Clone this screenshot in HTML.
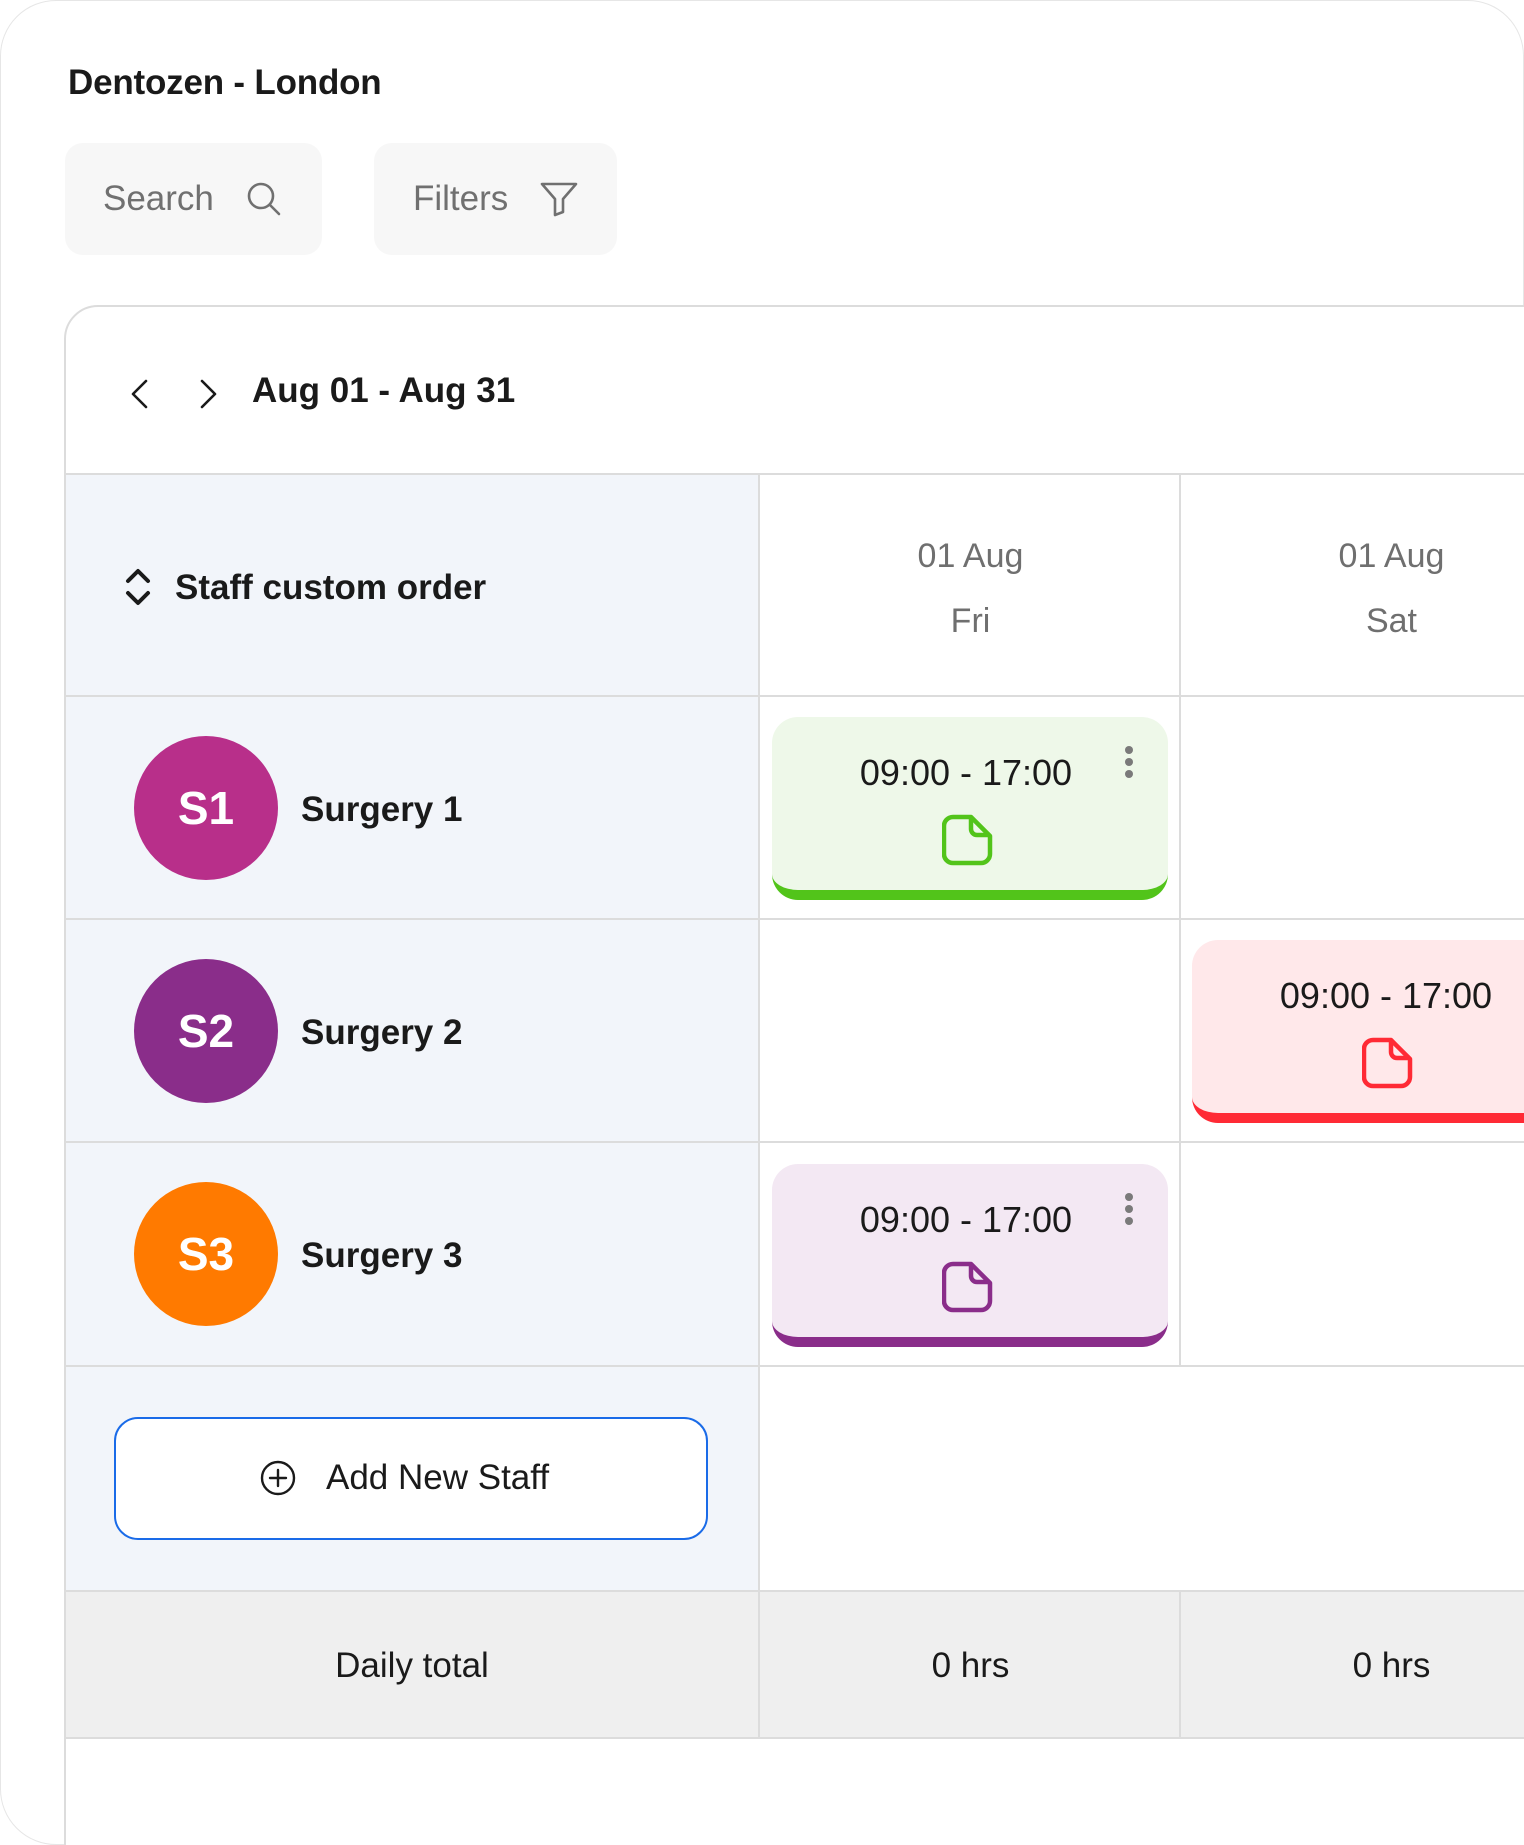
<!DOCTYPE html>
<html style="width:1524px;height:1845px;overflow:hidden"><head><meta charset="utf-8"><style>
*{margin:0;padding:0;box-sizing:border-box}
body{width:1524px;height:1845px;background:#fff;font-family:"Liberation Sans",sans-serif;position:relative;overflow:hidden;color:#1a1a1a}
.abs{position:absolute}
.panel{left:0;top:0;width:1524px;height:1845px;border:1px solid #e6e6e6;border-radius:56px;background:#fff}
.title{left:68px;top:63px;font-size:35px;font-weight:700;letter-spacing:-0.2px}
.box{background:#f7f7f7;border-radius:18px;height:112px;top:143px}
.box span{position:absolute;top:36px;font-size:35px;color:#707070}
.card{left:64px;top:305px;width:1500px;height:1600px;border:2px solid #dcdcdc;border-radius:34px;background:#fff;overflow:hidden}
.hl{height:2px;background:#dcdcdc}
.vl{width:2px;background:#dcdcdc}
.t34{font-size:34px}
.av{width:144px;height:144px;border-radius:50%;color:#fff;font-size:46px;font-weight:700;text-align:center;line-height:144px;left:132px}
.name{left:299px;font-size:35px;font-weight:700}
.shift{width:396px;height:183px;border-radius:26px;border-bottom:10px solid}
.shift .tm{position:absolute;left:0;width:100%;text-align:center;top:35px;font-size:36px;color:#1a1a1a;padding-right:8px}
.shift svg.doc{position:absolute;left:170px;top:97px}
.dots{position:absolute;left:352px;top:28px}
.date{width:421px;text-align:center;font-size:34px;color:#6f6f6f}
</style></head><body>
<div class="abs panel"></div>
<div class="abs title">Dentozen - London</div>
<div class="abs box" style="left:65px;width:257px"><span style="left:38px">Search</span>
<svg class="abs" style="left:181px;top:38px" width="36" height="36" viewBox="0 0 36 36" fill="none" stroke="#707070" stroke-width="2.6" stroke-linecap="round"><circle cx="15" cy="15" r="12"/><path d="M24 24l9 9"/></svg></div>
<div class="abs box" style="left:374px;width:243px"><span style="left:39px">Filters</span>
<svg class="abs" style="left:165px;top:38px" width="40" height="36" viewBox="0 0 40 36" fill="none" stroke="#707070" stroke-width="2.6" stroke-linejoin="round"><path d="M3 3h34L24 18v13l-8 3V18z"/></svg></div>

<div class="abs card">
 <div class="abs" style="left:0;top:166px;width:692px;height:1118px;background:#f2f5fa"></div>
 <div class="abs" style="left:0;top:1284px;width:1500px;height:148px;background:#efefef"></div>
 <div class="abs hl" style="left:0;top:166px;width:1500px"></div>
 <div class="abs hl" style="left:0;top:388px;width:1500px"></div>
 <div class="abs hl" style="left:0;top:611px;width:1500px"></div>
 <div class="abs hl" style="left:0;top:834px;width:1500px"></div>
 <div class="abs hl" style="left:0;top:1058px;width:1500px"></div>
 <div class="abs hl" style="left:0;top:1283px;width:1500px"></div>
 <div class="abs hl" style="left:0;top:1430px;width:1500px"></div>
 <div class="abs vl" style="left:692px;top:166px;height:1266px"></div>
 <div class="abs vl" style="left:1113px;top:166px;height:894px"></div>
 <div class="abs vl" style="left:1113px;top:1283px;height:149px"></div>

 <svg class="abs" style="left:64px;top:72px" width="20" height="30" viewBox="0 0 20 30" fill="none" stroke="#1a1a1a" stroke-width="2.6" stroke-linecap="round" stroke-linejoin="round"><path d="M16 2L3 15l13 13"/></svg>
 <svg class="abs" style="left:133px;top:72px" width="20" height="30" viewBox="0 0 20 30" fill="none" stroke="#1a1a1a" stroke-width="2.6" stroke-linecap="round" stroke-linejoin="round"><path d="M3 2l13 13L3 28"/></svg>
 <div class="abs" style="left:186px;top:64px;font-size:35px;font-weight:700">Aug 01 - Aug 31</div>

 <svg class="abs" style="left:58px;top:260px" width="28" height="40" viewBox="0 0 28 40" fill="none" stroke="#1a1a1a" stroke-width="4" stroke-linecap="round" stroke-linejoin="round"><path d="M4 14L14 4l10 10M4 26l10 10 10-10"/></svg>
 <div class="abs" style="left:109px;top:261px;font-size:35px;font-weight:700">Staff custom order</div>

 <div class="abs date" style="left:694px;top:230px">01 Aug</div>
 <div class="abs date" style="left:694px;top:295px">Fri</div>
 <div class="abs date" style="left:1115px;top:230px">01 Aug</div>
 <div class="abs date" style="left:1115px;top:295px">Sat</div>

 <div class="abs av" style="top:429px;left:68px;background:#b82f8a">S1</div>
 <div class="abs name" style="top:483px;left:235px">Surgery 1</div>
 <div class="abs av" style="top:652px;left:68px;background:#8a2d8a">S2</div>
 <div class="abs name" style="top:706px;left:235px">Surgery 2</div>
 <div class="abs av" style="top:875px;left:68px;background:#ff7a00">S3</div>
 <div class="abs name" style="top:929px;left:235px">Surgery 3</div>

 <div class="abs shift" style="left:706px;top:410px;background:#eef8e9;border-color:#52c41a">
  <div class="tm">09:00 - 17:00</div>
  <svg class="dots" width="10" height="34"><circle cx="5" cy="5" r="4" fill="#7a7a7a"/><circle cx="5" cy="17" r="4" fill="#7a7a7a"/><circle cx="5" cy="29" r="4" fill="#7a7a7a"/></svg>
  <svg class="doc" width="52" height="52" viewBox="0 0 52 52" fill="none" stroke="#52c41a" stroke-width="4.5" stroke-linejoin="round"><path d="M11 3h18l19 19v18a9 9 0 0 1-9 9H11a9 9 0 0 1-9-9V12a9 9 0 0 1 9-9z"/><path d="M29 3v12a6 6 0 0 0 6 6h13"/></svg>
 </div>
 <div class="abs shift" style="left:1126px;top:633px;background:#ffe8ea;border-color:#ff2a35">
  <div class="tm">09:00 - 17:00</div>
  <svg class="doc" width="52" height="52" viewBox="0 0 52 52" fill="none" stroke="#ff2a35" stroke-width="4.5" stroke-linejoin="round"><path d="M11 3h18l19 19v18a9 9 0 0 1-9 9H11a9 9 0 0 1-9-9V12a9 9 0 0 1 9-9z"/><path d="M29 3v12a6 6 0 0 0 6 6h13"/></svg>
 </div>
 <div class="abs shift" style="left:706px;top:857px;background:#f3e8f3;border-color:#8a2d8a">
  <div class="tm">09:00 - 17:00</div>
  <svg class="dots" width="10" height="34"><circle cx="5" cy="5" r="4" fill="#7a7a7a"/><circle cx="5" cy="17" r="4" fill="#7a7a7a"/><circle cx="5" cy="29" r="4" fill="#7a7a7a"/></svg>
  <svg class="doc" width="52" height="52" viewBox="0 0 52 52" fill="none" stroke="#8a2d8a" stroke-width="4.5" stroke-linejoin="round"><path d="M11 3h18l19 19v18a9 9 0 0 1-9 9H11a9 9 0 0 1-9-9V12a9 9 0 0 1 9-9z"/><path d="M29 3v12a6 6 0 0 0 6 6h13"/></svg>
 </div>

 <div class="abs" style="left:48px;top:1110px;width:594px;height:123px;border:2.5px solid #1a6be8;border-radius:24px;background:#fff">
  <svg class="abs" style="left:144px;top:41px" width="36" height="36" viewBox="0 0 36 36" fill="none" stroke="#1a1a1a" stroke-width="2.4" stroke-linecap="round"><circle cx="18" cy="18" r="16"/><path d="M18 10v16M10 18h16"/></svg>
  <div class="abs" style="left:210px;top:39px;font-size:35px">Add New Staff</div>
 </div>

 <div class="abs" style="left:0;width:692px;text-align:center;top:1339px;font-size:35px">Daily total</div>
 <div class="abs" style="left:694px;width:421px;text-align:center;top:1339px;font-size:35px">0 hrs</div>
 <div class="abs" style="left:1115px;width:421px;text-align:center;top:1339px;font-size:35px">0 hrs</div>
</div>
</body></html>
